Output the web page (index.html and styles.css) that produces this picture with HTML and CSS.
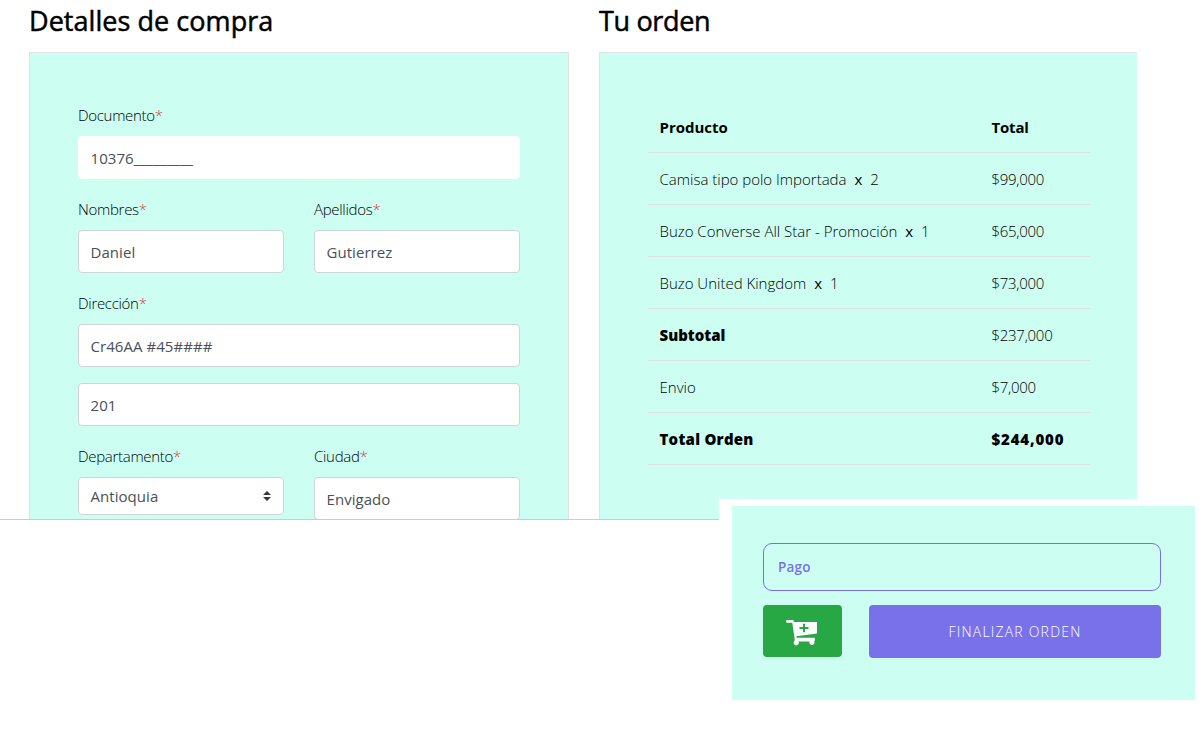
FILE: index.html
```
<!DOCTYPE html>
<html lang="es">
<head>
<meta charset="utf-8">
<title>Detalles de compra</title>
<link rel="stylesheet" href="styles.css">
</head>
<body>
<main class="checkout">
  <section class="billing">
    <h2 class="title title-billing">Detalles de compra</h2>
    <form class="panel">
      <div class="group">
        <label class="label">Documento<span class="req">*</span></label>
        <div class="control control-plain">10376_________</div>
      </div>
      <div class="pair">
        <div class="group">
          <label class="label">Nombres<span class="req">*</span></label>
          <div class="control">Daniel</div>
        </div>
        <div class="group">
          <label class="label">Apellidos<span class="req">*</span></label>
          <div class="control">Gutierrez</div>
        </div>
      </div>
      <div class="group">
        <label class="label">Dirección<span class="req">*</span></label>
        <div class="control">Cr46AA #45####</div>
      </div>
      <div class="group"><div class="control">201</div></div>
      <div class="pair">
        <div class="group">
          <label class="label">Departamento<span class="req">*</span></label>
          <div class="control select">Antioquia
            <svg class="caret" width="8" height="10" viewBox="0 0 4 5"><path fill="#343a40" d="M2 0L0 2h4zm0 5L0 3h4z"/></svg>
          </div>
        </div>
        <div class="group">
          <label class="label">Ciudad<span class="req">*</span></label>
          <div class="control">Envigado</div>
        </div>
      </div>
    </form>
  </section>
  <section class="order">
    <h2 class="title title-order">Tu orden</h2>
    <div class="panel panel-order">
      <div class="line head"><span>Producto</span><span class="head-total">Total</span></div>
      <div class="line"><span>Camisa tipo polo Importada <b class="times">x</b> 2</span><span class="price">$99,000</span></div>
      <div class="line"><span>Buzo Converse All Star - Promoción <b class="times">x</b> 1</span><span class="price">$65,000</span></div>
      <div class="line"><span>Buzo United Kingdom <b class="times">x</b> 1</span><span class="price">$73,000</span></div>
      <div class="line"><span class="strong">Subtotal</span><span class="price">$237,000</span></div>
      <div class="line"><span>Envio</span><span class="price">$7,000</span></div>
      <div class="line"><span class="strong grand">Total Orden</span><span class="strong grand-price">$244,000</span></div>
    </div>
  </section>
</main>
<aside class="payment">
  <div class="payment-card">
    <div class="method">Pago</div>
    <div class="actions">
      <button class="btn btn-cart" type="button" aria-label="Agregar">
        <svg width="32" height="28" viewBox="0 0 32 28"><path fill="#fff" d="M1 1H7.2L8 3H31V14.5L10.4 17.3L10.6 18.8H28.8V21.4L28.2 22.4A2.5 2.5 0 1 1 23.6 22.6H12.4A2.5 2.5 0 1 1 8.3 22.2L8.8 20.7L6.3 3.8H2.2A1.4 1.4 0 0 1 1 1Z"/><path stroke="#28a745" stroke-width="2" d="M18 4.8v8.4M13.5 9h9"/></svg>
      </button>
      <button class="btn btn-finish" type="button">FINALIZAR ORDEN</button>
    </div>
  </div>
</aside>
</body>
</html>
```
FILE: styles.css
```
* { box-sizing: border-box; }
body {
  margin: 0;
  height: 740px;
  position: relative;
  overflow: hidden;
  background: #fff;
  color: #000;
  font: 300 15px/27px "Open Sans", "Noto Sans", sans-serif;
}
.checkout {
  display: flex;
  gap: 30px;
  height: 520px;
  padding-left: 29px;
  overflow: hidden;
  border-bottom: 1px solid #ccc;
}
.billing { width: 540px; }
.order { width: 538px; }
.title {
  margin: 0;
  height: 52px;
  padding-top: 4px;
  font-size: 27px;
  font-weight: 500;
  line-height: 34px;
  white-space: nowrap;
  -webkit-text-stroke: 0.5px #000;
}
.title-billing { letter-spacing: 0.05px; }
.title-order { letter-spacing: -0.35px; }
.panel {
  height: 620px;
  padding: 48px;
  background: #ccfff2;
  border: 1px solid #dee2e6;
}
.panel-order { border-right: 0; padding-right: 47px; }
.group { margin-bottom: 16px; }
.pair { display: grid; grid-template-columns: 1fr 1fr; gap: 30px; }
.pair .group { min-width: 0; }
.label { display: block; height: 35px; padding-top: 1px; letter-spacing: -0.3px; }
.req { color: #dc3545; }
.control {
  height: 43px;
  padding: 1px 12px 0 11.5px;
  background: #fff;
  border: 1px solid #ced4da;
  border-radius: 4px;
  color: #495057;
  font-weight: 400;
  line-height: 40px;
  letter-spacing: 0.05px;
  white-space: nowrap;
}
.control-plain { border-color: #fff; }
.select {
  display: flex;
  align-items: center;
  justify-content: space-between;
  height: 38px;
  line-height: 36px;
  padding-top: 0;
}
.line {
  display: grid;
  grid-template-columns: 332px 1fr;
  height: 52px;
  border-bottom: 1px solid #dee2e6;
  line-height: 52px;
  white-space: nowrap;
}
.line > span { padding-left: 11.5px; }
.head { font-weight: 700; }
.head-total { letter-spacing: -0.2px; }
.price { letter-spacing: -0.28px; }
.times { margin: 0 4px; font-weight: 400; }
.strong { font-weight: 800; }
.grand { letter-spacing: 0.25px; }
.grand-price { letter-spacing: 0.85px; }
.payment {
  position: absolute;
  left: 719px;
  top: 499px;
  width: 485px;
  height: 241px;
  padding: 7px 9px 0 13px;
  background: #fff;
}
.payment-card { height: 194px; padding: 37px 34px 0 31px; background: #ccfff2; }
.method {
  height: 48px;
  padding-left: 14px;
  border: 1px solid #7971ea;
  border-radius: 9px;
  color: #7971ea;
  font-size: 13.5px;
  font-weight: 600;
  letter-spacing: 0.2px;
  line-height: 47px;
}
.actions { display: flex; gap: 27px; margin-top: 14px; }
.btn { border: 0; border-radius: 4px; color: #fff; font: inherit; padding: 0; }
.btn-cart { width: 79px; height: 52px; background: #28a745; display: flex; align-items: center; justify-content: center; padding: 4px 2px 0 0; }
.btn-finish { width: 292px; height: 53px; background: #7971ea; font-size: 14px; letter-spacing: 1.2px; }
```
